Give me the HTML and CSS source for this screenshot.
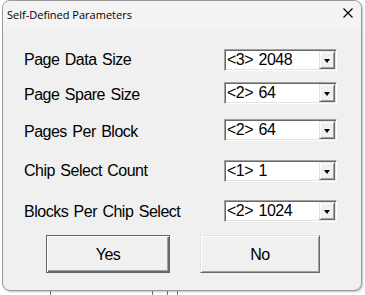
FILE: index.html
```html
<!DOCTYPE html>
<html>
<head>
<meta charset="utf-8">
<link rel="stylesheet" href="styles.css">
</head>
<body>
<div class="window">
  <div class="titlebar">
    <span class="title">Self-Defined Parameters</span>
    <svg class="close" width="10" height="10" viewBox="0 0 10 10"><path d="M0.5 0.5L9.5 9.5M9.5 0.5L0.5 9.5" stroke="#000" stroke-width="1.1" fill="none"/></svg>
  </div>
  <div class="form">
    <div class="row r1"><span class="label">Page Data Size</span><div class="combo"><span class="value">&lt;3&gt; 2048</span><span class="drop"><span class="arrow"></span></span></div></div>
    <div class="row r2"><span class="label">Page Spare Size</span><div class="combo"><span class="value">&lt;2&gt; 64</span><span class="drop"><span class="arrow"></span></span></div></div>
    <div class="row r3"><span class="label">Pages Per Block</span><div class="combo"><span class="value">&lt;2&gt; 64</span><span class="drop"><span class="arrow"></span></span></div></div>
    <div class="row r4"><span class="label">Chip Select Count</span><div class="combo"><span class="value">&lt;1&gt; 1</span><span class="drop"><span class="arrow"></span></span></div></div>
    <div class="row r5"><span class="label">Blocks Per Chip Select</span><div class="combo"><span class="value">&lt;2&gt; 1024</span><span class="drop"><span class="arrow"></span></span></div></div>
  </div>
  <div class="buttons">
    <div class="btn btn-default">Yes</div>
    <div class="btn">No</div>
  </div>
</div>
<div class="backdrop"></div>
</body>
</html>
```
FILE: styles.css
```css
html, body {
  margin: 0;
  padding: 0;
  background: #ffffff;
}
body {
  width: 365px;
  height: 295px;
  overflow: hidden;
}
.window {
  width: 360px;
  height: 291px;
  box-sizing: border-box;
  margin-left: 2px;
  border: 1px solid #9a9a9a;
  border-radius: 8px;
  background: #f0f0f0;
  overflow: hidden;
  display: flex;
  flex-direction: column;
  box-shadow: 1px 1px 2px rgba(0,0,0,0.25);
}
.titlebar {
  height: 29px;
  flex: none;
  display: flex;
  justify-content: space-between;
  align-items: flex-start;
  background: #f3f3f3;
}
.title {
  margin: 6px 0 0 4px;
  font-family: "Open Sans", "Noto Sans", sans-serif;
  font-size: 11px;
  line-height: 16px;
  color: #000;
}
.close {
  margin: 7px 8px 0 0;
  display: block;
}
.form {
  display: flex;
  flex-direction: column;
  padding-left: 21px;
}
.row {
  display: flex;
  align-items: center;
  height: 22px;
}
.r1 { margin-top: 19px; }
.r2 { margin-top: 11px; }
.r3 { margin-top: 15px; }
.r4 { margin-top: 19px; }
.r5 { margin-top: 18px; }
.label, .value, .btn {
  font-family: "Liberation Sans", Arial, sans-serif;
  font-size: 16px;
  letter-spacing: -0.5px;
  word-spacing: 1.5px;
  color: #000;
}
.label {
  width: 200px;
  line-height: 18px;
}
.r2 .label, .r3 .label { padding-top: 4px; }
.r5 .label { padding-top: 2px; }
.combo {
  width: 113px;
  height: 22px;
  box-sizing: border-box;
  border-style: solid;
  border-width: 1px;
  border-color: #a0a0a0 #ffffff #ffffff #a0a0a0;
  box-shadow: inset 1px 1px 0 #696969, inset -1px -1px 0 #e3e3e3;
  background: #ffffff;
  padding: 1px;
  display: flex;
  align-items: stretch;
}
.value {
  flex: 1;
  padding-left: 1px;
  line-height: 18px;
}
.drop {
  width: 16px;
  box-sizing: border-box;
  background: #f0f0f0;
  border-style: solid;
  border-width: 1px;
  border-color: #e3e3e3 #696969 #696969 #e3e3e3;
  box-shadow: inset 1px 1px 0 #ffffff, inset -1px -1px 0 #a0a0a0;
  display: flex;
  align-items: center;
  justify-content: center;
}
.arrow {
  width: 0;
  height: 0;
  border-left: 3.5px solid transparent;
  border-right: 3.5px solid transparent;
  border-top: 4px solid #000;
  margin-top: 1px;
}
.buttons {
  display: flex;
  gap: 30px;
  margin-top: 13px;
  padding-left: 43px;
}
.btn {
  height: 38px;
  box-sizing: border-box;
  display: flex;
  align-items: center;
  justify-content: center;
  background: #f0f0f0;
  padding-top: 1px;
}
.btn-default {
  width: 124px;
  border: 1px solid #646464;
  box-shadow: inset 1px 1px 0 #ffffff, inset -1px -1px 0 #696969, inset -2px -2px 0 #a0a0a0;
}
.btn:not(.btn-default) {
  width: 120px;
  border-style: solid;
  border-width: 1px;
  border-color: #e3e3e3 #696969 #696969 #e3e3e3;
  box-shadow: inset 1px 1px 0 #ffffff, inset -1px -1px 0 #a0a0a0;
}
.backdrop {
  height: 4px;
  background:
    linear-gradient(to right, transparent 50px, #6d6d6d 50px, #6d6d6d 51px, transparent 51px),
    linear-gradient(to right, transparent 152px, #6d6d6d 152px, #6d6d6d 153px, transparent 153px),
    linear-gradient(to right, transparent 167px, #6d6d6d 167px, #6d6d6d 168px, transparent 168px),
    linear-gradient(to right, transparent 177px, #6d6d6d 177px, #6d6d6d 178px, transparent 178px);
}
```
